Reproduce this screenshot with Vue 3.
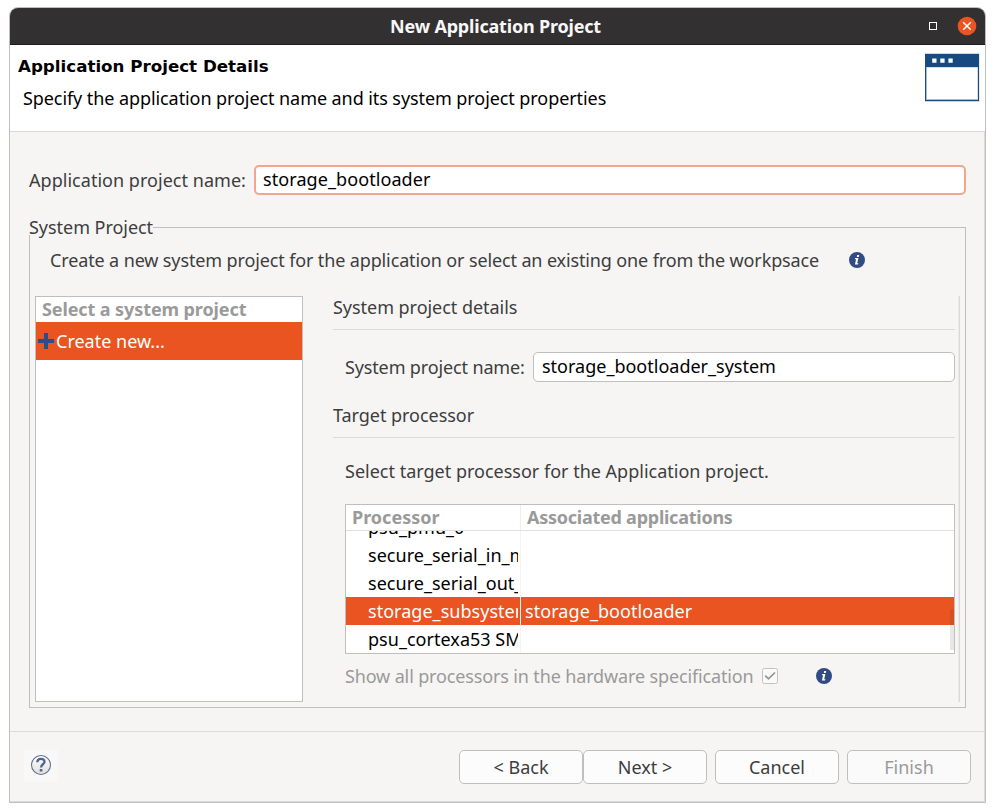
<script setup>
const processors = [
  { name: 'psu_pmu_0', apps: '' },
  { name: 'secure_serial_in_mb', apps: '' },
  { name: 'secure_serial_out_mb', apps: '' },
  { name: 'storage_subsystem', apps: 'storage_bootloader', selected: true },
  { name: 'psu_cortexa53 SMP', apps: '' },
]
</script>

<template>
  <div class="window">
    <div class="titlebar">
      <span class="title">New Application Project</span>
      <div class="controls">
        <span class="maximize"></span>
        <svg class="close" width="20" height="20" viewBox="0 0 20 20">
          <circle cx="10" cy="10" r="9.3" fill="#e95420" />
          <path d="M6.2 6.2 13.8 13.8M13.8 6.2 6.2 13.8" stroke="#fff" stroke-width="1.5" />
        </svg>
      </div>
    </div>

    <header class="header">
      <div class="heading">
        <h1>Application Project Details</h1>
        <p>Specify the application project name and its system project properties</p>
      </div>
      <svg class="banner" width="55" height="49" viewBox="0 0 55 49">
        <rect x="0" y="0.4" width="54.3" height="48.2" fill="#a6bdd3" />
        <rect x="0" y="1" width="54" height="47" fill="#164a80" />
        <rect x="1" y="14" width="52" height="33" fill="#a6bdd3" />
        <rect x="2" y="14.5" width="50.5" height="31.5" fill="#fff" />
        <path d="M7.2 5.5h4.3v4.3H7.2zM15.3 5.5h4.3v4.3h-4.3zM23.4 5.5h4.3v4.3h-4.3z" fill="#fff" />
      </svg>
    </header>

    <main class="main">
      <div class="name-row">
        <span class="label">Application project name:</span>
        <div class="input focused"><span>storage_bootloader</span></div>
      </div>

      <section class="group">
        <div class="legend"><span>System Project</span></div>
        <div class="group-body">
          <div class="intro">
            <span>Create a new system project for the application or select an existing one from the workpsace</span>
            <svg class="info" width="16" height="16" viewBox="0 0 16 16">
              <circle cx="8" cy="8" r="8" fill="#314c84" />
              <path d="M8.2 3.1h2l-.4 1.9h-2zM6.2 6.1h3.2l-1.2 5.2h1.2l-.3 1.2H5.9l1.2-5.2H5.9z" fill="#fff" />
            </svg>
          </div>
          <div class="panes">
            <div class="list">
              <div class="list-head">Select a system project</div>
              <div class="list-item">
                <svg width="16" height="16" viewBox="0 0 16 16"><path d="M6 0h4v6h6v4h-6v6H6v-6H0V6h6z" fill="#314c84" /></svg>
                <span>Create new...</span>
              </div>
            </div>

            <div class="details">
              <h2>System project details</h2>
              <div class="system-name">
                <span class="label">System project name:</span>
                <div class="input"><span>storage_bootloader_system</span></div>
              </div>
              <h2 class="second">Target processor</h2>
              <p class="hint">Select target processor for the Application project.</p>
              <div class="table">
                <div class="thead">
                  <span class="col">Processor</span>
                  <span class="col-apps">Associated applications</span>
                </div>
                <div class="tbody">
                  <div v-for="p in processors" :key="p.name" class="row" :class="{ selected: p.selected }">
                    <div class="cell"><span>{{ p.name }}</span></div>
                    <div class="apps">{{ p.apps }}</div>
                  </div>
                </div>
                <span class="thumb"></span>
              </div>
              <div class="show-all">
                <span>Show all processors in the hardware specification</span>
                <svg class="check" width="16" height="16" viewBox="0 0 16 16">
                  <rect x=".5" y=".5" width="15" height="15" rx="2" fill="#fafafa" stroke="#c4c2bf" />
                  <path d="M3.2 7.6 6.5 10.9 13 4.5" fill="none" stroke="#929595" stroke-width="1.7" />
                </svg>
                <svg class="info" width="16" height="16" viewBox="0 0 16 16">
                  <circle cx="8" cy="8" r="8" fill="#314c84" />
                  <path d="M8.2 3.1h2l-.4 1.9h-2zM6.2 6.1h3.2l-1.2 5.2h1.2l-.3 1.2H5.9l1.2-5.2H5.9z" fill="#fff" />
                </svg>
              </div>
            </div>
          </div>
        </div>
      </section>
    </main>

    <footer class="footer">
      <div class="help">
        <svg width="22" height="22" viewBox="0 0 22 22">
          <defs>
            <linearGradient id="help-fill" x1="0" y1="0" x2="0" y2="1">
              <stop offset="0" stop-color="#fff" />
              <stop offset="1" stop-color="#dedede" />
            </linearGradient>
          </defs>
          <circle cx="11" cy="11" r="9.5" fill="url(#help-fill)" stroke="#62728f" stroke-width="1.1" />
          <path d="M7.3 8.3C7.3 3.7 14.5 3.9 14.5 7.7 14.5 10.3 11 10.3 11 13.6" fill="none" stroke="#50648c" stroke-width="2.3" />
          <rect x="9.7" y="15" width="2.7" height="2.6" rx=".5" fill="#50648c" />
        </svg>
      </div>
      <div class="buttons">
        <button>&lt; Back</button>
        <button>Next &gt;</button>
        <button class="spaced">Cancel</button>
        <button class="spaced" disabled>Finish</button>
      </div>
    </footer>
  </div>
</template>

<style>
body {
  margin: 0;
  background: #fff;
}
</style>

<style scoped>
* {
  box-sizing: border-box;
}

.window {
  width: 977px;
  height: 796px;
  margin: 7px 0 0 9px;
  display: flex;
  flex-direction: column;
  border: 1px solid #bfbfbf;
  border-radius: 9px 9px 0 0;
  overflow: hidden;
  background: #f6f5f4;
  box-shadow: inset -1px -1px 0 #dcdbda;
  color: #3d3d3d;
  font: 18px/24px "Noto Sans", "Open Sans", sans-serif;
  white-space: nowrap;
}

h1, h2, p {
  margin: 0;
  font-size: inherit;
  font-weight: inherit;
}

svg {
  display: block;
  flex: none;
}

.titlebar {
  position: relative;
  flex: none;
  height: 37px;
  display: flex;
  justify-content: center;
  align-items: center;
  background: #333031;
  border-bottom: 1px solid #1d1c1c;
  color: #f7f7f7;
}

.title {
  font-weight: 700;
  letter-spacing: -0.19px;
  margin-left: -4px;
}

.controls {
  position: absolute;
  right: 8px;
  top: 8px;
  display: flex;
  align-items: center;
  gap: 20px;
}

.maximize {
  width: 8px;
  height: 8px;
  border: 1px solid #fff;
}

.header {
  flex: none;
  height: 87px;
  display: flex;
  justify-content: space-between;
  padding: 8px 5px 0 8px;
  background: #fff;
  border-bottom: 1px solid #d9d9d9;
  color: #000;
}

.heading h1 {
  font: 700 16.7px/26px "DejaVu Sans", sans-serif;
}

.heading p {
  margin: 7px 0 0 5px;
  letter-spacing: -0.08px;
}

.main {
  flex: none;
  height: 599px;
  padding: 33px 19px 0;
}

.name-row,
.system-name {
  display: flex;
  align-items: center;
}

.input {
  flex: 1;
  height: 30px;
  padding: 1px 0 0 8px;
  background: #fff;
  border: 1px solid #c1bfbd;
  border-radius: 5px;
  color: #000;
}

.input.focused {
  border: 2px solid #f3a58d;
  padding: 0 0 0 7px;
  letter-spacing: 0.08px;
}

.name-row .label {
  width: 225px;
  letter-spacing: 0.03px;
}

.group {
  margin-top: 20px;
}

.legend {
  height: 8px;
  display: flex;
  align-items: flex-start;
  padding-top: 0;
  height: 20px;
  letter-spacing: -0.04px;
}

.legend::after {
  content: "";
  flex: 1;
  height: 8px;
  margin-top: 12px;
  border: solid #c1bfbd;
  border-width: 1px 1px 0 0;
}

.group-body {
  height: 473px;
  border: 1px solid #c1bfbd;
  border-top: 0;
  padding: 13px 5px 5px;
}

.intro {
  display: flex;
  align-items: center;
  gap: 30px;
  padding-left: 15px;
  letter-spacing: -0.13px;
}

.panes {
  height: 406px;
  margin-top: 24px;
  display: flex;
  gap: 30px;
}

.list {
  width: 268px;
  border: 1px solid #c1bfbd;
  background: #fff;
}

.list-head {
  height: 25px;
  padding-left: 6px;
  font-weight: 700;
  letter-spacing: -0.1px;
  color: #9a9a9a;
}

.list-item {
  height: 38px;
  display: flex;
  align-items: center;
  gap: 2px;
  padding-left: 2px;
  background: #e95420;
  color: #fff;
}

.details {
  flex: 1;
  padding-right: 4px;
  border-right: 1px solid #dad9d8;
  box-shadow: inset -1px 0 0 #ebeae9;
}

.details h2 {
  height: 34px;
  line-height: 23px;
  letter-spacing: -0.04px;
  border-bottom: 1px solid #dcdbda;
}

.details h2.second {
  margin-top: 22px;
}

.system-name {
  margin: 22px 0 0 12px;
}

.system-name .label {
  width: 188px;
  letter-spacing: -0.14px;
}

.hint {
  margin: 21px 0 0 12px;
}

.table {
  position: relative;
  height: 150px;
  margin: 21px 0 0 12px;
  display: flex;
  flex-direction: column;
  border: 1px solid #c1bfbd;
  background: #fff;
}

.thead {
  flex: none;
  height: 26px;
  display: flex;
  border-bottom: 1px solid #e0dfde;
  font-weight: 700;
  color: #9a9a9a;
}

.thead .col {
  width: 175px;
  padding-left: 6px;
  border-right: 1px solid #efefee;
}

.col-apps {
  padding-left: 6px;
  letter-spacing: -0.25px;
}

.tbody {
  flex: 1;
  min-height: 0;
  display: flex;
  flex-direction: column;
  justify-content: flex-end;
  overflow: hidden;
}

.row {
  flex: none;
  height: 28px;
  line-height: 28px;
  display: flex;
  color: #000;
}

.row.selected {
  background: #e95420;
  color: #fff;
}

.cell {
  width: 175px;
  padding: 0 2px 0 22px;
  border-right: 1px solid #f4f4f3;
}

.cell span {
  display: block;
  overflow: hidden;
  letter-spacing: 0.03px;
}

.apps {
  padding-left: 4px;
  letter-spacing: 0.07px;
}

.thumb {
  position: absolute;
  right: 0;
  bottom: 3px;
  width: 4px;
  height: 41px;
  border-radius: 2px 2px 0 0;
  background: rgba(61, 61, 61, 0.12);
}

.show-all {
  display: flex;
  align-items: center;
  margin: 10px 0 0 12px;
  letter-spacing: -0.14px;
  color: #9a9a9a;
}

.show-all .check {
  margin-left: 8px;
}

.show-all .info {
  margin-left: 38px;
}

.footer {
  flex: 1;
  display: flex;
  justify-content: space-between;
  padding: 18px 14px 0 14px;
  border-top: 1px solid #dcdbda;
}

.help {
  width: 34px;
  height: 32px;
  padding: 4px 0 0 6px;
  background: #f8f8f8;
}

.buttons {
  display: flex;
}

button {
  width: 124px;
  height: 34px;
  padding: 0;
  border: 1px solid #c1bfbd;
  border-radius: 5px;
  background: #fcfcfc;
  color: #3d3d3d;
  font: inherit;
}

button.spaced {
  margin-left: 8px;
}

button:disabled {
  background: #fafafa;
  color: #9a9a9a;
}
</style>
